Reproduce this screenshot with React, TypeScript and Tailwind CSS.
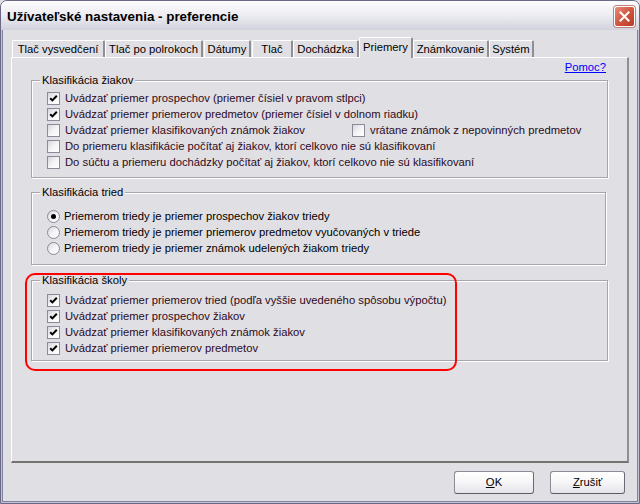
import React from "react";

const Check = ({ checked }: { checked?: boolean }) => (
  <span className="w-[13px] h-[13px] shrink-0 border border-[#8a8a98] bg-gradient-to-br from-[#d6d6de] via-[#f4f4f6] to-white flex items-center justify-center">
    {checked && (
      <svg width="9" height="9" viewBox="0 0 9 9">
        <path d="M1.2 4.2 L3.4 6.4 L7.8 1.8" stroke="#000" strokeWidth="2" fill="none" />
      </svg>
    )}
  </span>
);

const Radio = ({ checked }: { checked?: boolean }) => (
  <span className="w-[13px] h-[13px] shrink-0 rounded-full border border-[#8a8a98] bg-gradient-to-br from-[#d6d6de] via-[#f4f4f6] to-white flex items-center justify-center">
    {checked && <span className="w-[5px] h-[5px] rounded-full bg-black" />}
  </span>
);

const CRow = ({ checked, children }: { checked?: boolean; children: React.ReactNode }) => (
  <div className="h-[16px] flex items-center">
    <Check checked={checked} />
    <span className="ml-[5px] text-[#2e0a24] whitespace-nowrap">{children}</span>
  </div>
);

const RRow = ({ checked, children }: { checked?: boolean; children: React.ReactNode }) => (
  <div className="h-[16px] flex items-center">
    <Radio checked={checked} />
    <span className="ml-[4px] text-black whitespace-nowrap">{children}</span>
  </div>
);

const Group = ({
  label,
  className,
  children,
}: {
  label: string;
  className: string;
  children: React.ReactNode;
}) => (
  <div
    className={
      "relative border border-[#a5a5ad] shadow-[inset_1px_1px_0_#ffffff,1px_1px_0_#ffffff] pl-[15px] " +
      className
    }
  >
    <span className="absolute top-[-7px] left-[8px] px-[2px] bg-[#e0dfe3] leading-[13px] text-black whitespace-nowrap">
      {label}
    </span>
    {children}
  </div>
);

const tabs: { label: string; w: string; ml: string; sel?: boolean }[] = [
  { label: "Tlač vysvedčení", w: "w-[93px]", ml: "ml-[1px]" },
  { label: "Tlač po polrokoch", w: "w-[98px]", ml: "ml-0" },
  { label: "Dátumy", w: "w-[47px]", ml: "ml-[1px]" },
  { label: "Tlač", w: "w-[41px]", ml: "ml-[1px]" },
  { label: "Dochádzka", w: "w-[66px]", ml: "ml-0" },
  { label: "Priemery", w: "w-[54px]", ml: "ml-0", sel: true },
  { label: "Známkovanie", w: "w-[76px]", ml: "ml-0" },
  { label: "Systém", w: "w-[45px]", ml: "ml-0" },
];

export default function App() {
  return (
    <div className="relative w-[640px] h-[504px] overflow-hidden bg-[#e0dfe3] font-['Liberation_Sans',Arial,sans-serif] text-[11.25px] text-black">
      <div className="w-full h-full flex flex-col border border-[#686884] rounded-t-[7px]">
        {/* Title bar */}
        <div className="h-[29px] shrink-0 flex items-center justify-between pl-[6px] pr-[4px] rounded-t-[6px] bg-gradient-to-b from-[#fdfdfe] via-[#ececf2] to-[#d2d2dd]">
          <span className="font-bold text-[13.4px] leading-[16px] mt-[3px] text-black">
            Užívateľské nastavenia - preferencie
          </span>
          <div className="w-[21px] h-[21px] mt-[2px] rounded-[3px] border border-white bg-gradient-to-br from-[#e58c7c] via-[#d2553f] to-[#b83a2a] shadow-[0_0_0_1px_#b8847c] flex items-center justify-center">
            <svg width="11" height="11" viewBox="0 0 11 11">
              <path d="M1.5 1.5 L9.5 9.5 M9.5 1.5 L1.5 9.5" stroke="#fff" strokeWidth="2" strokeLinecap="square" />
            </svg>
          </div>
        </div>

        {/* Body */}
        <div className="flex-1 flex flex-col border-x border-b border-[#c2c2d0]">
          <div className="flex-1 flex flex-col border-x border-b border-[#8282a0] pl-[8px] pr-[8px] pt-[7px]">
            {/* Tabs */}
            <div className="h-[20px] flex items-end relative z-10">
              {tabs.map((t) =>
                t.sel ? (
                  <div
                    key={t.label}
                    className={`${t.w} ${t.ml} h-[21px] mb-[-1px] bg-[#e0dfe3] border-t border-l border-white border-r-2 border-r-[#8e8e94] rounded-t-[2px] flex items-start justify-center pt-[2px] leading-[14px] whitespace-nowrap`}
                  >
                    {t.label}
                  </div>
                ) : (
                  <div
                    key={t.label}
                    className={`${t.w} ${t.ml} h-[17px] bg-[#e0dfe3] border-t border-l border-white border-r-2 border-r-[#8e8e94] rounded-t-[2px] flex items-center justify-center leading-[14px] whitespace-nowrap`}
                  >
                    {t.label}
                  </div>
                )
              )}
            </div>

            {/* Panel */}
            <div className="h-[406px] border-t border-l border-white border-r-2 border-b-2 border-r-[#8e8e94] border-b-[#747270] px-[19px] pt-[1px]">
              <div className="h-[16px] flex items-center justify-end pr-[2px]">
                <span className="text-[#0000ff] underline leading-[16px]">Pomoc?</span>
              </div>

              <Group label="Klasifikácia žiakov" className="mt-[5px] pt-[9px] pb-[7px]">
                <CRow checked>Uvádzať priemer prospechov (priemer čísiel v pravom stlpci)</CRow>
                <CRow checked>Uvádzať priemer priemerov predmetov (priemer čísiel v dolnom riadku)</CRow>
                <div className="h-[16px] flex items-center">
                  <Check />
                  <span className="ml-[5px] w-[287px] text-[#2e0a24] whitespace-nowrap">
                    Uvádzať priemer klasifikovaných známok žiakov
                  </span>
                  <Check />
                  <span className="ml-[5px] text-[#2e0a24] whitespace-nowrap">
                    vrátane známok z nepovinných predmetov
                  </span>
                </div>
                <CRow>Do priemeru klasifikácie počítať aj žiakov, ktorí celkovo nie sú klasifikovaní</CRow>
                <CRow>Do súčtu a priemeru dochádzky počítať aj žiakov, ktorí celkovo nie sú klasifikovaní</CRow>
              </Group>

              <Group label="Klasifikácia tried" className="mt-[14px] mr-[2px] pt-[15px] pb-[8px]">
                <RRow checked>Priemerom triedy je priemer prospechov žiakov triedy</RRow>
                <RRow>Priemerom triedy je priemer priemerov predmetov vyučovaných v triede</RRow>
                <RRow>Priemerom triedy je priemer známok udelených žiakom triedy</RRow>
              </Group>

              <Group label="Klasifikácia školy" className="mt-[15px] pt-[11px] pb-[4px]">
                <CRow checked>Uvádzať priemer priemerov tried (podľa vyššie uvedeného spôsobu výpočtu)</CRow>
                <CRow checked>Uvádzať priemer prospechov žiakov</CRow>
                <CRow checked>Uvádzať priemer klasifikovaných známok žiakov</CRow>
                <CRow checked>Uvádzať priemer priemerov predmetov</CRow>
              </Group>
            </div>

            {/* Buttons */}
            <div className="mt-[8px] flex justify-end gap-[16px] pr-[4px]">
              <button className="w-[80px] h-[23px] rounded-[3px] border border-[#8c8c98] border-r-[#6a6a74] border-b-[#5c5c66] bg-gradient-to-b from-white via-[#f6f6f8] to-[#e4e4ea] text-[11.25px] text-black">
                <span className="underline">O</span>K
              </button>
              <button className="w-[75px] h-[23px] rounded-[3px] border border-[#8c8c98] border-r-[#6a6a74] border-b-[#5c5c66] bg-gradient-to-b from-white via-[#f6f6f8] to-[#e4e4ea] text-[11.25px] text-black">
                <span className="underline">Z</span>rušiť
              </button>
            </div>
          </div>
        </div>
      </div>

      {/* Red highlight annotation */}
      <div className="absolute left-[25px] top-[273px] w-[432px] h-[98px] border-2 border-[#ff0000] rounded-[10px] pointer-events-none" />
    </div>
  );
}
